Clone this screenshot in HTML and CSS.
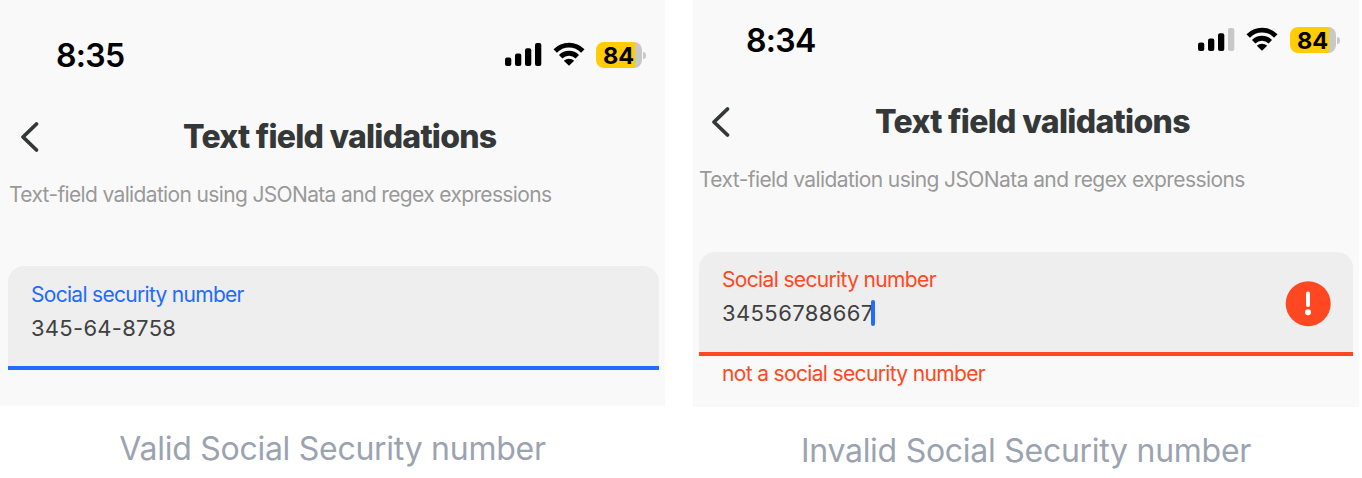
FILE: index.html
```
<!DOCTYPE html>
<html lang="en">
<head>
<meta charset="utf-8">
<title>Text field validations</title>
<link rel="stylesheet" href="styles.css">
</head>
<body>
<main class="gallery">
  <figure class="shot shot-valid">
    <section class="phone">
      <header class="status">
        <span class="time">8:35</span>
        <svg class="signal" width="38" height="24" viewBox="0 0 38 24"><rect x="1" y="15.5" width="6.3" height="8.5" rx="2"/><rect x="11" y="11.5" width="6.3" height="12.5" rx="2"/><rect x="21" y="6.3" width="6.3" height="17.7" rx="2"/><rect x="31" y="1" width="6.3" height="23" rx="2"/></svg>
        <svg class="wifi" width="32" height="24" viewBox="0 0 32 24"><path d="M2.2 9a19.2 19.2 0 0 1 27.6 0M7.7 14.7a11.7 11.7 0 0 1 16.6 0" fill="none" stroke="#000" stroke-width="4.8"/><path d="M16 23.8l-5.2-5.1a8 8 0 0 1 10.4 0z"/></svg>
        <span class="battery"><span class="cell">84</span><i class="nub"></i></span>
      </header>
      <div class="nav">
        <svg class="back" width="22" height="32" viewBox="0 0 22 32"><path d="M18.5 3L5 16L18.5 29" fill="none" stroke="#353838" stroke-width="3.8" stroke-linecap="round" stroke-linejoin="round"/></svg>
        <h1 class="title">Text field validations</h1>
      </div>
      <p class="intro">Text-field validation using JSONata and regex expressions</p>
      <div class="field">
        <div class="entry"><span class="label">Social security number</span><span class="value">345-64-8758</span></div>
      </div>
    </section>
    <figcaption class="caption">Valid Social Security number</figcaption>
  </figure>
  <figure class="shot shot-invalid">
    <section class="phone">
      <header class="status">
        <span class="time">8:34</span>
        <svg class="signal" width="38" height="24" viewBox="0 0 38 24"><rect x="1" y="15.5" width="6.3" height="8.5" rx="2"/><rect x="11" y="11.5" width="6.3" height="12.5" rx="2"/><rect x="21" y="6.3" width="6.3" height="17.7" rx="2"/><rect x="31" y="1" width="6.3" height="23" rx="2" fill="#c8c8c8"/></svg>
        <svg class="wifi" width="32" height="24" viewBox="0 0 32 24"><path d="M2.2 9a19.2 19.2 0 0 1 27.6 0M7.7 14.7a11.7 11.7 0 0 1 16.6 0" fill="none" stroke="#000" stroke-width="4.8"/><path d="M16 23.8l-5.2-5.1a8 8 0 0 1 10.4 0z"/></svg>
        <span class="battery"><span class="cell">84</span><i class="nub"></i></span>
      </header>
      <div class="nav">
        <svg class="back" width="22" height="32" viewBox="0 0 22 32"><path d="M18.5 3L5 16L18.5 29" fill="none" stroke="#353838" stroke-width="3.8" stroke-linecap="round" stroke-linejoin="round"/></svg>
        <h1 class="title">Text field validations</h1>
      </div>
      <p class="intro">Text-field validation using JSONata and regex expressions</p>
      <div class="field">
        <div class="entry"><span class="label">Social security number</span><span class="value">34556788667<i class="caret"></i></span></div>
        <svg class="alert" width="46" height="46" viewBox="0 0 46 46"><circle cx="23.2" cy="22.7" r="22.5" fill="#ff4821"/><path d="M23 12.6V24" stroke="#fff" stroke-width="4" stroke-linecap="round"/><circle cx="23" cy="31.2" r="3" fill="#fff"/></svg>
      </div>
      <p class="error">not a social security number</p>
    </section>
    <figcaption class="caption">Invalid Social Security number</figcaption>
  </figure>
</main>
</body>
</html>
```
FILE: styles.css
```
* { box-sizing: border-box; }
body { margin: 0; background: #fff; font-family: Inter, sans-serif; }
h1, p, figure { margin: 0; }
.gallery { display: flex; gap: 28px; width: 1362px; height: 478px; overflow: hidden; }
.shot-valid { width: 665px; --accent: #216bff; --top: 35px; }
.shot-invalid { width: 666px; --accent: #ff4821; --top: 20px; }
.phone { height: 406px; padding: var(--top) 6px 0 8px; background: #f9f9f9; }
.shot-invalid .phone { height: 407px; padding-left: 6px; }
.status { display: flex; align-items: center; height: 40px; padding-left: 48px; }
.shot-invalid .status { padding-left: 47px; }
.time { width: 448px; padding-top: 2px; font-size: 32px; line-height: 40px; font-weight: 600; letter-spacing: -0.7px; color: #000; white-space: nowrap; }
.shot-invalid .time { width: 451px; }
.signal, .wifi { flex: none; margin-bottom: 2px; }
.wifi { margin-left: 11px; }
.battery { display: flex; align-items: center; margin-left: 11px; }
.shot-invalid .battery { margin-left: 12px; }
.cell { width: 46px; height: 26px; padding-right: 1px; border-radius: 8px; background: linear-gradient(90deg, #ffcc05 39px, #c8c8c8 39px); text-align: center; font-size: 23.5px; line-height: 27px; font-weight: 700; letter-spacing: -0.2px; }
.nub { width: 3px; height: 7px; margin-left: 1px; border-radius: 0 3px 3px 0; background: #c8c8c8; }
.nav { display: flex; align-items: center; height: 44px; margin-top: 40px; padding-left: 10px; }
.title { margin-left: 143px; font-size: 32px; line-height: 44px; font-weight: 800; letter-spacing: -0.75px; color: #353838; white-space: nowrap; }
.shot-invalid .title { margin-left: 144px; letter-spacing: -0.68px; }
.intro { margin-top: 21px; padding-left: 1px; font-size: 21px; line-height: 30px; letter-spacing: -0.65px; color: #999; white-space: nowrap; }
.shot-invalid .intro { padding-left: 0; letter-spacing: -0.59px; }
.field { display: flex; justify-content: space-between; height: 104px; margin-top: 56px; padding: 15px 22px 0 23px; background: #eee; border-radius: 16px 16px 0 0; box-shadow: inset 0 -4px var(--accent); }
.shot-invalid .field { margin-top: 57px; padding-top: 14px; }
.entry { display: flex; flex-direction: column; }
.label { font-size: 21px; line-height: 28px; letter-spacing: -0.7px; color: var(--accent); }
.shot-invalid .label { letter-spacing: -0.65px; }
.value { display: flex; align-items: center; margin-top: 4px; font-size: 22px; line-height: 30px; letter-spacing: 0.28px; color: #404040; }
.shot-invalid .value { letter-spacing: 0.4px; }
.caret { width: 4px; height: 26px; margin-left: -3px; border-radius: 2px; background: #216bff; }
.alert { margin-top: 15px; }
.error { padding: 4px 0 0 23px; font-size: 21px; line-height: 28px; letter-spacing: -0.65px; color: var(--accent); }
.caption { padding-top: 23px; font-size: 32px; line-height: 40px; letter-spacing: -0.27px; text-align: center; color: #9ca3b0; }
.shot-invalid .caption { padding-top: 24px; }
```
